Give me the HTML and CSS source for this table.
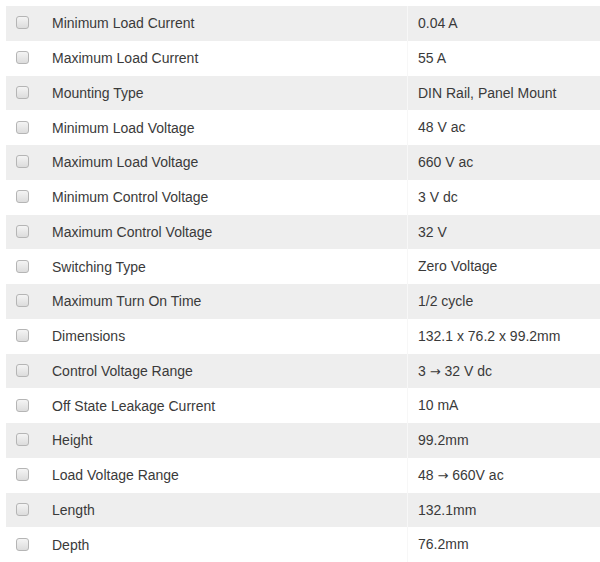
FILE: index.html
```html
<!DOCTYPE html>
<html>
<head>
<meta charset="utf-8">
<link rel="stylesheet" href="styles.css">
</head>
<body>
<div class="table">
  <div class="row"><div class="cb"><span class="box"></span></div><div class="name">Minimum Load Current</div><div class="val">0.04 A</div></div>
  <div class="row"><div class="cb"><span class="box"></span></div><div class="name">Maximum Load Current</div><div class="val">55 A</div></div>
  <div class="row"><div class="cb"><span class="box"></span></div><div class="name">Mounting Type</div><div class="val">DIN Rail, Panel Mount</div></div>
  <div class="row"><div class="cb"><span class="box"></span></div><div class="name">Minimum Load Voltage</div><div class="val">48 V ac</div></div>
  <div class="row"><div class="cb"><span class="box"></span></div><div class="name">Maximum Load Voltage</div><div class="val">660 V ac</div></div>
  <div class="row"><div class="cb"><span class="box"></span></div><div class="name">Minimum Control Voltage</div><div class="val">3 V dc</div></div>
  <div class="row"><div class="cb"><span class="box"></span></div><div class="name">Maximum Control Voltage</div><div class="val">32 V</div></div>
  <div class="row"><div class="cb"><span class="box"></span></div><div class="name">Switching Type</div><div class="val">Zero Voltage</div></div>
  <div class="row"><div class="cb"><span class="box"></span></div><div class="name">Maximum Turn On Time</div><div class="val">1/2 cycle</div></div>
  <div class="row"><div class="cb"><span class="box"></span></div><div class="name">Dimensions</div><div class="val">132.1 x 76.2 x 99.2mm</div></div>
  <div class="row"><div class="cb"><span class="box"></span></div><div class="name">Control Voltage Range</div><div class="val">3 <span class="arr">→</span> 32 V dc</div></div>
  <div class="row"><div class="cb"><span class="box"></span></div><div class="name">Off State Leakage Current</div><div class="val">10 mA</div></div>
  <div class="row"><div class="cb"><span class="box"></span></div><div class="name">Height</div><div class="val">99.2mm</div></div>
  <div class="row"><div class="cb"><span class="box"></span></div><div class="name">Load Voltage Range</div><div class="val">48 <span class="arr">→</span> 660V ac</div></div>
  <div class="row"><div class="cb"><span class="box"></span></div><div class="name">Length</div><div class="val">132.1mm</div></div>
  <div class="row"><div class="cb"><span class="box"></span></div><div class="name">Depth</div><div class="val">76.2mm</div></div>
</div>
</body>
</html>
```
FILE: styles.css
```css
html, body {
  margin: 0;
  padding: 0;
  background: #ffffff;
}
body {
  padding: 6px 0 0 6px;
  font-family: "Liberation Sans", Arial, sans-serif;
  font-size: 14px;
  color: #3a3a3a;
}
.table {
  display: flex;
  flex-direction: column;
}
.row {
  display: grid;
  grid-template-columns: 46px 355px 1fr;
  height: 34.75px;
  align-items: center;
}
.row:nth-child(odd) {
  background: #eeeeee;
}
.cb {
  display: flex;
  align-items: center;
  padding-left: 10px;
  height: 100%;
}
.box {
  width: 11px;
  height: 11px;
  border: 1px solid #b5b5b5;
  border-radius: 3px;
  background: linear-gradient(#f4f4f4, #dcdcdc);
  margin-top: -1px;
}
.name {
  line-height: 34px;
}
.val {
  height: 100%;
  line-height: 34px;
  padding-left: 10px;
  border-left: 1px solid #f7f7f7;
}
.arr {
  font-family: "DejaVu Sans", sans-serif;
  font-size: 13px;
}
```
